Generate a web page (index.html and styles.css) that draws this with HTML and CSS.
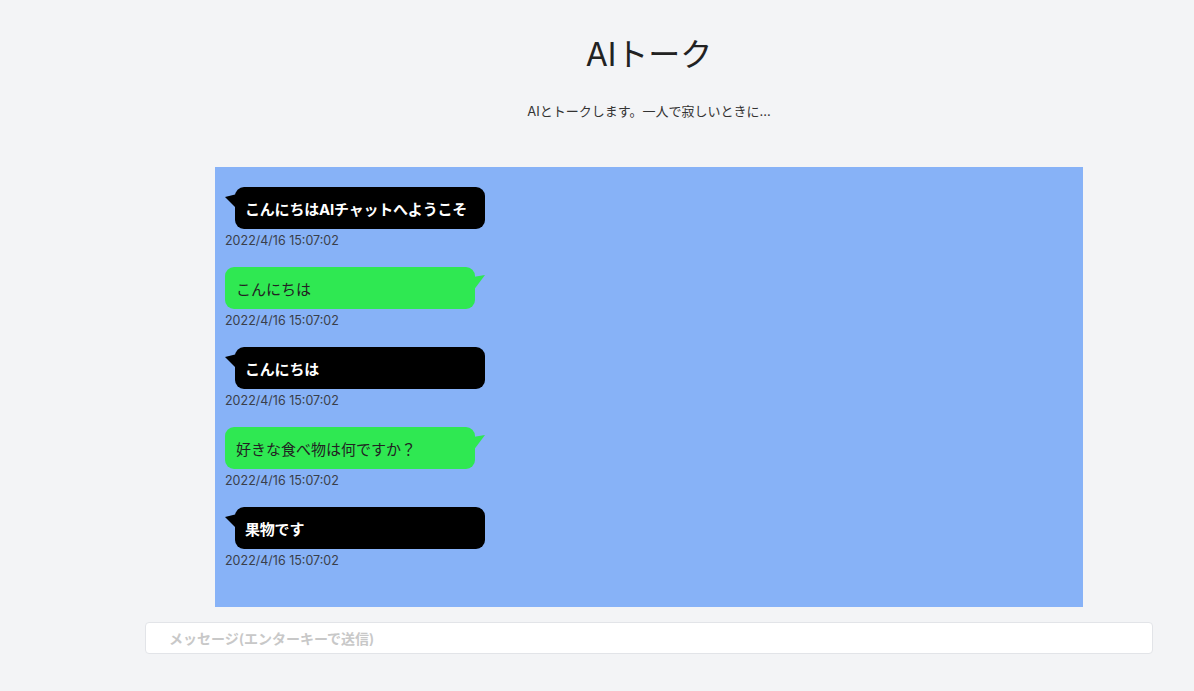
FILE: index.html
```html
<!DOCTYPE html>
<html lang="ja">
<head>
<meta charset="utf-8">
<title>AIトーク</title>
<link rel="stylesheet" href="styles.css">
</head>
<body>
<div class="layout">
  <aside class="side"></aside>
  <main class="main">
    <h1 class="title">AIトーク</h1>
    <p class="subtitle">AIとトークします。一人で寂しいときに...</p>
    <section class="chat">
      <div class="msg msg-ai">
        <div class="bubble bubble-ai">こんにちはAIチャットへようこそ</div>
        <div class="time">2022/4/16 15:07:02</div>
      </div>
      <div class="msg msg-me">
        <div class="bubble bubble-me">こんにちは</div>
        <div class="time">2022/4/16 15:07:02</div>
      </div>
      <div class="msg msg-ai">
        <div class="bubble bubble-ai">こんにちは</div>
        <div class="time">2022/4/16 15:07:02</div>
      </div>
      <div class="msg msg-me">
        <div class="bubble bubble-me">好きな食べ物は何ですか？</div>
        <div class="time">2022/4/16 15:07:02</div>
      </div>
      <div class="msg msg-ai">
        <div class="bubble bubble-ai">果物です</div>
        <div class="time">2022/4/16 15:07:02</div>
      </div>
    </section>
    <input class="input" type="text" placeholder="メッセージ(エンターキーで送信)">
  </main>
</div>
</body>
</html>
```

FILE: styles.css
```css
* { box-sizing: border-box; }
html, body {
  margin: 0;
  padding: 0;
  background: #f3f4f6;
  font-family: Inter, "Noto Sans CJK JP", sans-serif;
  color: #1f1f1f;
}
.layout {
  display: grid;
  grid-template-columns: 104px 1fr;
  min-height: 691px;
}
.main {
  display: flex;
  flex-direction: column;
  align-items: center;
  padding-top: 35px;
}
.title {
  margin: 0;
  font-size: 32px;
  line-height: 40px;
  font-weight: 400;
  color: #222;
}
.subtitle {
  margin: 26px 0 0;
  font-size: 13px;
  line-height: 20px;
  color: #333;
}
.chat {
  margin-top: 46px;
  width: 868px;
  height: 440px;
  background: #87b2f7;
  padding: 20px 10px;
  display: flex;
  flex-direction: column;
  gap: 15px;
}
.msg {
  display: flex;
  flex-direction: column;
  align-items: flex-start;
}
.bubble {
  position: relative;
  width: 250px;
  height: 42px;
  border-radius: 9px;
  padding: 0 12px;
  display: flex;
  align-items: center;
  font-size: 15px;
}
.bubble-ai {
  margin-left: 10px;
  background: #000;
  color: #fff;
  font-weight: 700;
  padding-left: 10px;
  letter-spacing: -0.2px;
}
.bubble-ai::before {
  content: "";
  position: absolute;
  left: -10px;
  top: 7px;
  width: 12px;
  height: 15px;
  background: #000;
  clip-path: polygon(0 3px, 100% 0, 100% 100%);
}
.bubble-me {
  background: #2fe852;
  color: #222;
  padding-left: 11px;
}
.bubble-me::after {
  content: "";
  position: absolute;
  right: -10px;
  top: 8px;
  width: 12px;
  height: 16px;
  background: #2fe852;
  clip-path: polygon(0 2px, 100% 0, 0 100%);
}
.time {
  font-size: 12.5px;
  line-height: 22px;
  padding-top: 1px;
  color: #3a3f4a;
}
.input {
  margin-top: 15px;
  width: 1008px;
  height: 32px;
  border: 1px solid #e2e4e8;
  border-radius: 4px;
  background: #fff;
  padding: 0 23px;
  font-family: Inter, "Noto Sans CJK JP", sans-serif;
  font-size: 14px;
  outline: none;
}
.input::placeholder {
  color: #c8c8c8;
  font-weight: 600;
}
```
